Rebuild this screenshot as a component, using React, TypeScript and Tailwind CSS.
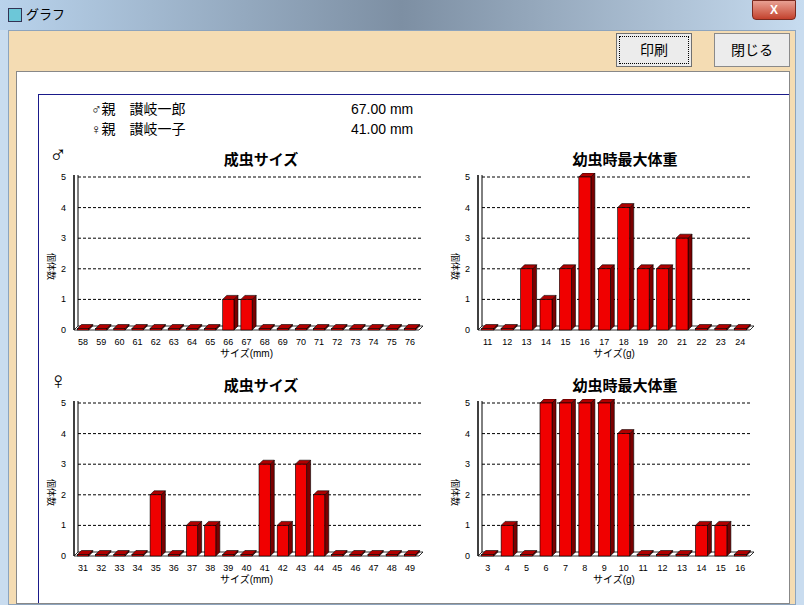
import React from 'react';

const font = { fontFamily: '"Liberation Sans", "Noto Sans CJK JP", sans-serif' };

type ChartProps = {
  labels: string[];
  values: number[];
  xlabel: string;
  width: number;
  right: number;
};

const Chart: React.FC<ChartProps> = ({ labels, values, xlabel, width, right }) => {
  const ax = 35;
  const zero = 157;
  const unit = 30.6;
  const cw = (right - ax) / labels.length;
  const bw = cw * 0.62;
  const d = 4;
  return (
    <svg width={width} height={186} className="block">
      <text x={9} y={80} fontSize={9} transform="rotate(90 9 80)" fill="#000" style={font}>個体数</text>
      {[1, 2, 3, 4, 5].map((v) => (
        <line key={v} x1={ax + d} x2={right + 2} y1={zero - v * unit} y2={zero - v * unit} stroke="#000" strokeDasharray="3 2" />
      ))}
      {[0, 1, 2, 3, 4, 5].map((v) => (
        <text key={v} x={ax - 8} y={zero - v * unit + 3} fontSize={9} textAnchor="end" style={font}>{v}</text>
      ))}
      <line x1={ax} x2={ax} y1={zero - 5 * unit - 2} y2={zero} stroke="#000" strokeWidth={1.5} />
      <line x1={ax + d} x2={ax + d} y1={zero - 5 * unit - 2} y2={zero - d} stroke="#000" />
      <polygon points={`${ax},${zero} ${ax + d},${zero - d} ${right + d},${zero - d} ${right},${zero}`} fill="#fff" stroke="#000" strokeWidth={0.8} />
      {values.map((v, i) => {
        const x = ax + i * cw + (cw - bw) / 2;
        const h = Math.max(v * unit, 1.5);
        const y = zero - h;
        return (
          <g key={i} stroke="#000" strokeWidth={0.6}>
            <polygon points={`${x + bw},${y} ${x + bw + d},${y - d} ${x + bw + d},${zero - d} ${x + bw},${zero}`} fill="#7a0000" />
            <polygon points={`${x},${y} ${x + d},${y - d} ${x + bw + d},${y - d} ${x + bw},${y}`} fill="#b00000" />
            <rect x={x} y={y} width={bw} height={h} fill="#f00000" />
          </g>
        );
      })}
      {labels.map((l, i) => (
        <text key={l} x={ax + i * cw + cw / 2} y={172} fontSize={9} textAnchor="middle" style={font}>{l}</text>
      ))}
      <text x={(ax + right) / 2} y={184} fontSize={10} textAnchor="middle" style={font}>{xlabel}</text>
    </svg>
  );
};

const range = (a: number, b: number) => Array.from({ length: b - a + 1 }, (_, i) => String(a + i));

const Row: React.FC<{ sym: string; left: { labels: string[]; values: number[] }; right: { labels: string[]; values: number[] } }> = ({ sym, left, right }) => (
  <div className="flex">
    <div className="w-[404px] relative">
      <div className="absolute left-[10px] top-[-6px] text-[24px] leading-none">{sym}</div>
      <div className="text-center text-[15px] font-bold h-[24px] pl-[40px]">成虫サイズ</div>
      <Chart labels={left.labels} values={left.values} xlabel="サイズ(mm)" width={400} right={380} />
    </div>
    <div className="w-[330px]">
      <div className="text-center text-[15px] font-bold h-[24px] pl-[34px]">幼虫時最大体重</div>
      <Chart labels={right.labels} values={right.values} xlabel="サイズ(g)" width={330} right={307} />
    </div>
  </div>
);

export default function App() {
  return (
    <div className="w-[804px] h-[605px] relative overflow-hidden bg-[#c9dcef]" style={font}>
      <div className="h-[30px] flex items-center px-2 bg-gradient-to-r from-[#b9d3ec] via-[#7d8fa3] to-[#c7dcf0]">
        <div className="w-[14px] h-[14px] bg-[#6cc7d8] border border-[#335]" />
        <span className="ml-1 text-[13px] text-black">グラフ</span>
        <div className="ml-auto w-[44px] h-[20px] -mt-[10px] rounded-b-[4px] bg-gradient-to-b from-[#e8a093] to-[#c2402c] border border-[#7a2a1f] text-white text-[12px] font-bold flex items-center justify-center">X</div>
      </div>
      <div className="mx-[8px] h-[575px] bg-[#f4dcb3] border border-[#8da4bd] flex flex-col">
        <div className="flex justify-end gap-[22px] pr-[5px] pt-[2px] h-[40px]">
          <button className="w-[76px] h-[34px] bg-[#ececec] border border-[#707070] outline outline-1 outline-dotted outline-offset-[-4px] outline-black text-[14px]">印刷</button>
          <button className="w-[76px] h-[34px] bg-[#ececec] border border-[#8a8a8a] text-[14px]">閉じる</button>
        </div>
        <div className="ml-[7px] mr-[5px] flex-1 bg-white border border-[#888] pt-[22px] pl-[21px]">
          <div className="border-t border-l border-[#1a1a8a] h-full pt-[4px]">
            <div className="pl-[52px] text-[14px] leading-[20px]">
              <div className="flex"><span className="w-[260px]">♂親　讃岐一郎</span><span>67.00 mm</span></div>
              <div className="flex"><span className="w-[260px]">♀親　讃岐一子</span><span>41.00 mm</span></div>
            </div>
            <div className="mt-[10px]">
              <Row
                sym="♂"
                left={{ labels: range(58, 76), values: [0, 0, 0, 0, 0, 0, 0, 0, 1, 1, 0, 0, 0, 0, 0, 0, 0, 0, 0] }}
                right={{ labels: range(11, 24), values: [0, 0, 2, 1, 2, 5, 2, 4, 2, 2, 3, 0, 0, 0] }}
              />
            </div>
            <div className="mt-[16px]">
              <Row
                sym="♀"
                left={{ labels: range(31, 49), values: [0, 0, 0, 0, 2, 0, 1, 1, 0, 0, 3, 1, 3, 2, 0, 0, 0, 0, 0] }}
                right={{ labels: range(3, 16), values: [0, 1, 0, 5, 5, 5, 5, 4, 0, 0, 0, 1, 1, 0] }}
              />
            </div>
          </div>
        </div>
      </div>
    </div>
  );
}
